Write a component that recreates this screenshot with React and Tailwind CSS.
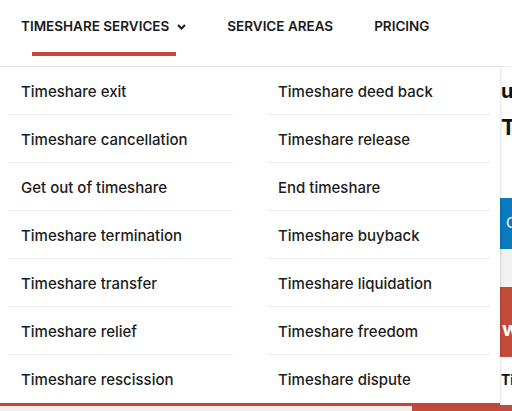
import React from "react";

const left = [
  "Timeshare exit",
  "Timeshare cancellation",
  "Get out of timeshare",
  "Timeshare termination",
  "Timeshare transfer",
  "Timeshare relief",
  "Timeshare rescission",
];
const right = [
  "Timeshare deed back",
  "Timeshare release",
  "End timeshare",
  "Timeshare buyback",
  "Timeshare liquidation",
  "Timeshare freedom",
  "Timeshare dispute",
];

function Column({ items }) {
  return (
    <div className="flex flex-col w-[223px]">
      {items.map((t, i) => (
        <div
          key={t}
          className={
            "h-[48px] flex items-center pl-[11px] pt-[3px] text-[15px] font-medium text-[#1c1c1c] " +
            (i < items.length - 1 ? "border-b border-[#ebebeb]" : "")
          }
        >
          {t}
        </div>
      ))}
    </div>
  );
}

export default function App() {
  return (
    <div
      className="w-[512px] h-[411px] overflow-hidden bg-white"
      style={{ fontFamily: "Inter, 'Noto Sans', sans-serif" }}
    >
      <nav className="h-[67px] border-b border-[#ececec] flex items-start pl-[21px] pt-[16px] gap-[41px] text-[13.5px] font-semibold text-[#1a1a1a]">
        <div className="relative flex items-center gap-[8px] h-[20px]">
          <span>TIMESHARE SERVICES</span>
          <svg width="9" height="6" viewBox="0 0 9 6" className="mt-[1px]">
            <path d="M1 1l3.5 3.5L8 1" fill="none" stroke="#1a1a1a" strokeWidth="2" />
          </svg>
          <div className="absolute left-[11px] right-[10px] top-[36px] h-[4px] bg-[#c0473a]" />
        </div>
        <div className="h-[20px] flex items-center">SERVICE AREAS</div>
        <div className="h-[20px] flex items-center">PRICING</div>
      </nav>
      <div className="relative h-[344px]">
        <div className="flex flex-col h-full pl-[500px]">
          <div className="h-[44px] flex items-center text-[20px] font-bold text-[#111] pl-[1px] pt-[4px]">u</div>
          <div className="h-[40px] flex items-start text-[22px] font-bold text-[#111] pl-[1px]">T</div>
          <div className="h-[47px]" />
          <div className="h-[51px] bg-[#0a79bd] flex items-center text-white text-[15px] pl-[6px]">C</div>
          <div className="h-[38px] bg-[#f1f1f1]" />
          <div className="h-[70px] bg-[#c24b39] flex items-center text-white font-bold text-[20px] pl-[2px] pt-[14px]">wi</div>
          <div className="h-[44px] flex items-center text-[14px] font-bold text-[#111] pl-[1px]">Ti</div>
          <div className="flex-1" />
        </div>
        <div className="absolute left-0 right-0 bottom-0 h-[6px] flex">
          <div className="w-[412px] bg-[#efefef]" />
          <div className="flex-1 bg-[#c24b39]" />
        </div>
        <div className="absolute left-0 top-0 w-[500px] bg-white border-b-[3px] border-[#c0473a] shadow-[1px_0_2px_rgba(0,0,0,0.12)] flex gap-[34px] pl-[10px]">
          <Column items={left} />
          <Column items={right} />
        </div>
      </div>
    </div>
  );
}
